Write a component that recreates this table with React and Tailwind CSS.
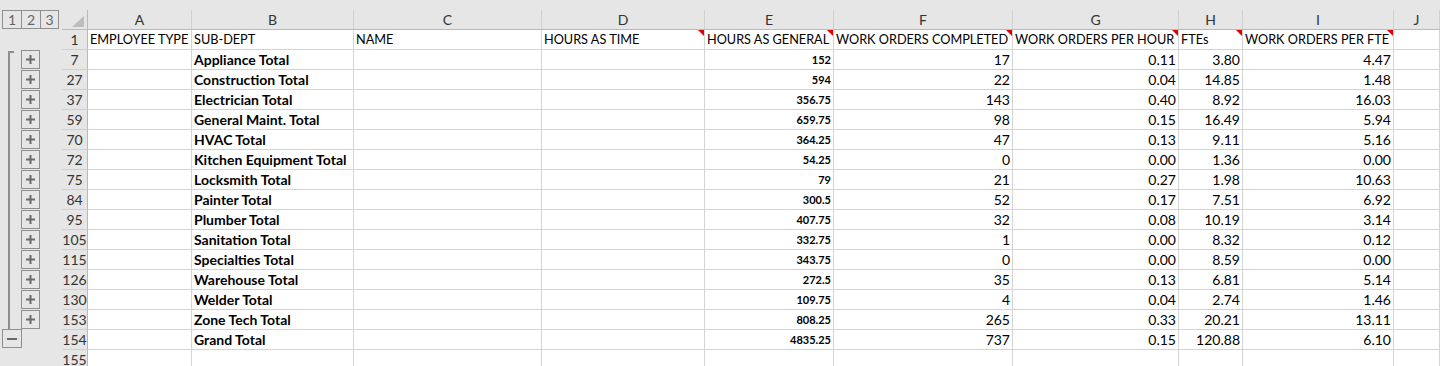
import React from 'react';

const cols = [
  { key: 'A', w: 'w-[104px]' },
  { key: 'B', w: 'w-[162px]' },
  { key: 'C', w: 'w-[188px]' },
  { key: 'D', w: 'w-[163px]' },
  { key: 'E', w: 'w-[129px]' },
  { key: 'F', w: 'w-[179px]' },
  { key: 'G', w: 'w-[166px]' },
  { key: 'H', w: 'w-[64px]' },
  { key: 'I', w: 'w-[151px]' },
  { key: 'J', w: 'flex-1' },
];

const headings = [
  { text: 'EMPLOYEE TYPE' },
  { text: 'SUB-DEPT' },
  { text: 'NAME' },
  { text: 'HOURS AS TIME', note: true },
  { text: 'HOURS AS GENERAL', note: true },
  { text: 'WORK ORDERS COMPLETED', note: true },
  { text: 'WORK ORDERS PER HOUR', note: true },
  { text: 'FTEs', note: true },
  { text: 'WORK ORDERS PER FTE', note: true },
  { text: '' },
];

const rows = [
  [7, 'Appliance Total', '152', '17', '0.11', '3.80', '4.47'],
  [27, 'Construction Total', '594', '22', '0.04', '14.85', '1.48'],
  [37, 'Electrician Total', '356.75', '143', '0.40', '8.92', '16.03'],
  [59, 'General Maint. Total', '659.75', '98', '0.15', '16.49', '5.94'],
  [70, 'HVAC Total', '364.25', '47', '0.13', '9.11', '5.16'],
  [72, 'Kitchen Equipment Total', '54.25', '0', '0.00', '1.36', '0.00'],
  [75, 'Locksmith Total', '79', '21', '0.27', '1.98', '10.63'],
  [84, 'Painter Total', '300.5', '52', '0.17', '7.51', '6.92'],
  [95, 'Plumber Total', '407.75', '32', '0.08', '10.19', '3.14'],
  [105, 'Sanitation Total', '332.75', '1', '0.00', '8.32', '0.12'],
  [115, 'Specialties Total', '343.75', '0', '0.00', '8.59', '0.00'],
  [126, 'Warehouse Total', '272.5', '35', '0.13', '6.81', '5.14'],
  [130, 'Welder Total', '109.75', '4', '0.04', '2.74', '1.46'],
  [153, 'Zone Tech Total', '808.25', '265', '0.33', '20.21', '13.11'],
];

const font = { fontFamily: 'Lato, "Liberation Sans", sans-serif' };

const Plus = () => (
  <svg width="9" height="9" viewBox="0 0 9 9">
    <rect x="0" y="3.5" width="9" height="2" fill="#6b6b6b" />
    <rect x="3.5" y="0" width="2" height="9" fill="#6b6b6b" />
  </svg>
);

const Minus = () => (
  <svg width="10" height="2" viewBox="0 0 10 2">
    <rect x="0" y="0" width="10" height="2" fill="#6b6b6b" />
  </svg>
);

// outline gutter on the far left
const Gutter = ({ kind }) => {
  if (kind === 'minus') {
    return (
      <div className="w-[62px] shrink-0 bg-[#e6e6e6] pl-[2px]">
        <div className="w-[20px] h-[19px] -mt-px border border-[#8f8f8f] flex items-center justify-center">
          <Minus />
        </div>
      </div>
    );
  }
  if (kind === 'plus' || kind === 'first') {
    return (
      <div className="w-[62px] shrink-0 bg-[#e6e6e6] pl-[8px] flex">
        <div className={`w-[6px] h-full flex flex-col ${kind === 'first' ? 'pt-[1px]' : ''}`}>
          {kind === 'first' && <div className="w-[6px] h-[2px] bg-[#8f8f8f]" />}
          <div className="w-[2px] flex-1 bg-[#8f8f8f]" />
        </div>
        <div className="ml-[7px] w-[19px] h-[19px] border border-[#8f8f8f] flex items-center justify-center">
          <Plus />
        </div>
      </div>
    );
  }
  return <div className="w-[62px] shrink-0 bg-[#e6e6e6]" />;
};

const RowHead = ({ n }) => (
  <div className="w-[26px] shrink-0 bg-[#e6e6e6] border-r border-b border-r-[#b9b9b9] border-b-[#d0d0d0] text-[14px] leading-[19px] text-center text-[#333]">
    {n}
  </div>
);

const Cell = ({ w, children, right, bold, size = 'text-[14px]', note }) => (
  <div
    className={`${w} shrink-0 relative bg-white border-r border-b border-[#d4d4d4] whitespace-nowrap leading-[19px] text-black ${
      right ? 'text-right pr-[2px]' : 'pl-[2px]'
    } ${bold ? 'font-bold' : ''} ${size}`}
  >
    {children}
    {note && (
      <svg className="absolute top-0 right-0" width="6" height="6" viewBox="0 0 6 6">
        <polygon points="0,0 6,0 6,6" fill="#e00000" />
      </svg>
    )}
  </div>
);

export default function App() {
  return (
    <div className="w-[1440px] h-[366px] overflow-hidden bg-[#e6e6e6] select-none" style={font}>
      <div className="h-[10px]" />

      {/* column headers */}
      <div className="flex h-[20px]">
        <div className="w-[62px] shrink-0 pl-[2px]">
          <div className="flex w-[57px] h-[19px] border border-[#8f8f8f] text-[14px] leading-[17px] text-[#666]">
            <div className="w-[18px] text-center">1</div>
            <div className="w-[19px] border-l border-[#8f8f8f] text-center">2</div>
            <div className="flex-1 border-l border-[#8f8f8f] text-center">3</div>
          </div>
        </div>
        <div className="w-[26px] shrink-0 border-r border-b border-[#b9b9b9] flex items-end justify-end pr-[3px] pb-[2px]">
          <svg width="12" height="11" viewBox="0 0 12 11">
            <polygon points="12,0 12,11 0,11" fill="#bdbdbd" />
          </svg>
        </div>
        {cols.map((c) => (
          <div
            key={c.key}
            className={`${c.w} shrink-0 border-r border-b border-r-[#d0d0d0] border-b-[#b9b9b9] text-center text-[14px] leading-[19px] text-[#333]`}
          >
            {c.key}
          </div>
        ))}
      </div>

      {/* row 1 headings */}
      <div className="flex h-[20px]">
        <Gutter />
        <RowHead n={1} />
        {cols.map((c, i) => (
          <Cell key={c.key} w={c.w} note={headings[i].note} size="text-[12.7px]">
            {headings[i].text}
          </Cell>
        ))}
      </div>

      {rows.map((r, idx) => (
        <div key={r[0]} className="flex h-[20px]">
          <Gutter kind={idx === 0 ? 'first' : 'plus'} />
          <RowHead n={r[0]} />
          <Cell w={cols[0].w} />
          <Cell w={cols[1].w} bold>{r[1]}</Cell>
          <Cell w={cols[2].w} />
          <Cell w={cols[3].w} />
          <Cell w={cols[4].w} right bold size="text-[11px]">{r[2]}</Cell>
          <Cell w={cols[5].w} right>{r[3]}</Cell>
          <Cell w={cols[6].w} right>{r[4]}</Cell>
          <Cell w={cols[7].w} right>{r[5]}</Cell>
          <Cell w={cols[8].w} right>{r[6]}</Cell>
          <Cell w={cols[9].w} />
        </div>
      ))}

      <div className="flex h-[20px]">
        <Gutter kind="minus" />
        <RowHead n={154} />
        <Cell w={cols[0].w} />
        <Cell w={cols[1].w} bold>Grand Total</Cell>
        <Cell w={cols[2].w} />
        <Cell w={cols[3].w} />
        <Cell w={cols[4].w} right bold size="text-[11px]">4835.25</Cell>
        <Cell w={cols[5].w} right>737</Cell>
        <Cell w={cols[6].w} right>0.15</Cell>
        <Cell w={cols[7].w} right>120.88</Cell>
        <Cell w={cols[8].w} right>6.10</Cell>
        <Cell w={cols[9].w} />
      </div>

      <div className="flex h-[20px]">
        <Gutter />
        <RowHead n={155} />
        {cols.map((c) => (
          <Cell key={c.key} w={c.w} />
        ))}
      </div>
    </div>
  );
}
